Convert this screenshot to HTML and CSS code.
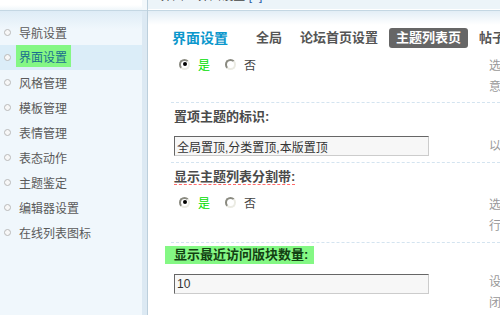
FILE: index.html
```html
<!DOCTYPE html>
<html lang="zh-CN">
<head>
<meta charset="utf-8">
<title>界面设置</title>
<link rel="stylesheet" href="styles.css">
</head>
<body>
<div class="page">
  <aside class="sidebar">
    <div class="side-top"></div>
    <ul class="menu">
      <li><i class="dot"></i><span>导航设置</span></li>
      <li class="active"><i class="dot"></i><span class="hl">界面设置</span></li>
      <li><i class="dot"></i><span>风格管理</span></li>
      <li><i class="dot"></i><span>模板管理</span></li>
      <li><i class="dot"></i><span>表情管理</span></li>
      <li><i class="dot"></i><span>表态动作</span></li>
      <li><i class="dot"></i><span>主题鉴定</span></li>
      <li><i class="dot"></i><span>编辑器设置</span></li>
      <li><i class="dot"></i><span>在线列表图标</span></li>
    </ul>
  </aside>
  <div class="divider"></div>
  <main class="main">
    <div class="topbar"><div class="crumb">界面 &raquo; 界面设置 <span class="plus">[+]</span></div></div>
    <div class="content">
      <div class="titlerow">
        <h3>界面设置</h3>
        <ul class="tabs">
          <li>全局</li>
          <li>论坛首页设置</li>
          <li class="current">主题列表页</li>
          <li>帖子内容页</li>
          <li>个人空间</li>
        </ul>
      </div>
      <div class="form">
        <div class="val v1">
          <div class="field radios"><span class="radio on"></span><span class="yes">是</span><span class="radio"></span><span class="no">否</span></div>
          <div class="tip"><div>选择“是”，主题列表页将显示此项内容，请根据</div><div>意愿设置</div></div>
        </div>
        <div class="label">置项主题的标识:</div>
        <div class="val v2">
          <div class="field"><input class="text" type="text" value="全局置顶,分类置顶,本版置顶"></div>
          <div class="tip"><div>以逗号分隔，依次为全局置顶、分类置顶、本版置顶的标识</div></div>
        </div>
        <div class="label"><span class="ul">显示主题列表分割带:</span></div>
        <div class="val v3">
          <div class="field radios"><span class="radio on"></span><span class="yes">是</span><span class="radio"></span><span class="no">否</span></div>
          <div class="tip"><div>选择“是”，将在置顶主题与普通主题之间显示分割带，</div><div>行间区分更加清晰</div></div>
        </div>
        <div class="label lg"><span class="green">显示最近访问版块数量:</span></div>
        <div class="val v4">
          <div class="field"><input class="text" type="text" value="10"></div>
          <div class="tip"><div>设置显示最近访问版块的数量，建议设置为 10 以内，0 为关</div><div>闭此功能</div></div>
        </div>
      </div>
    </div>
  </main>
</div>
</body>
</html>
```

FILE: styles.css
```css
html, body {
  margin: 0;
  padding: 0;
}
body {
  width: 500px;
  height: 315px;
  overflow: hidden;
  background: #fff;
  font-family: "Liberation Sans", "Noto Sans CJK SC", sans-serif;
  font-size: 12px;
  color: #444;
}
.page {
  display: flex;
  width: 500px;
  height: 315px;
  overflow: hidden;
}

/* sidebar */
.sidebar {
  width: 142px;
  flex: none;
  background: #f0f7fc;
}
.side-top {
  height: 10px;
  background: linear-gradient(#ffffff 50%, #eff6fa);
  border-bottom: 1px solid #c4d7e3;
}
.menu {
  list-style: none;
  margin: 0;
  padding: 9px 0 0;
  background: linear-gradient(#deecf6, #f0f7fc 18px) no-repeat;
}
.menu li {
  display: flex;
  align-items: center;
  height: 25px;
  padding-left: 4px;
  color: #5a5a5a;
  white-space: nowrap;
}
.dot {
  width: 7px;
  height: 7px;
  box-sizing: border-box;
  border: 1px solid #b9b9b9;
  border-radius: 50%;
  background: #f7f7f7;
  margin-right: 8px;
  flex: none;
}
.menu li.active {
  background: #dbedf8;
}
.hl {
  background: #84f784;
  color: #1a6e8e;
  line-height: 16px;
  padding: 5px 4px 1px 3px;
  margin: 0 0 4px -3px;
}
.divider {
  width: 5px;
  flex: none;
  background: linear-gradient(#f3f8fb 10px, #c4d7e3 10px, #c4d7e3 11px, #dce9f3 11px);
  border-right: 1px solid #bccfdc;
}

/* main */
.main {
  flex: 1;
  min-width: 0;
  overflow: hidden;
}
.topbar {
  height: 10px;
  background: #ecf4f9;
  border-bottom: 1px solid #c4d7e3;
  box-shadow: inset 0 -1px #ffffff;
  overflow: hidden;
  padding-left: 12px;
}
.crumb {
  line-height: 16px;
  margin-top: -12px;
  white-space: nowrap;
  color: #444;
}
.plus {
  color: #2a5fa8;
}
.content {
  padding: 17px 0 0 23px;
  background: linear-gradient(#e3eef6, #ffffff 14px) no-repeat;
}
.titlerow {
  display: flex;
  align-items: center;
  height: 20px;
  white-space: nowrap;
}
.titlerow h3 {
  margin: 0 0 0 1px;
  font-size: 14px;
  line-height: 20px;
  font-weight: bold;
  color: #0b97cc;
  flex: none;
}
.tabs {
  display: flex;
  list-style: none;
  margin: 0 0 0 21px;
  padding: 0;
}
.tabs li {
  flex: none;
  padding: 0 7px;
  margin-right: 4px;
  font-size: 13px;
  font-weight: bold;
  line-height: 20px;
  color: #555;
  border-radius: 3px;
}
.tabs li.current {
  background: #666;
  color: #fff;
}

/* form */
.form {
  margin-top: 8px;
}
.val {
  display: grid;
  grid-template-columns: 318px max-content;
}
.field {
  padding-left: 3px;
}
.tip {
  color: #999;
  line-height: 21px;
  white-space: nowrap;
}
.label {
  border-top: 1px dashed #d4e4f0;
  padding: 4px 0 0 3px;
  line-height: 20px;
  font-size: 13px;
  font-weight: bold;
  color: #4a4a4a;
  white-space: nowrap;
}
.label.lg {
  padding-top: 3px;
  line-height: 18px;
}
.ul {
  display: inline-block;
  line-height: 14px;
  vertical-align: top;
  margin-top: 3px;
  border-bottom: 1px dashed #ff6a6a;
}
.green {
  display: inline-block;
  background: #84f884;
  color: #124012;
  padding: 0 6px 0 9px;
  margin-left: -9px;
}

.radios {
  display: flex;
  align-items: center;
  height: 16px;
  padding-left: 8px;
}
.radio {
  width: 11px;
  height: 11px;
  box-sizing: border-box;
  border: 2px solid;
  border-color: #8a8a80 #ebebe3 #ebebe3 #8a8a80;
  border-radius: 50%;
  background: #fff;
  margin-right: 8px;
  display: flex;
  align-items: center;
  justify-content: center;
  flex: none;
}
.radio.on::after {
  content: "";
  width: 4px;
  height: 4px;
  border-radius: 50%;
  background: #000;
}
.yes {
  color: #00dd00;
  margin-right: 15px;
}
.no {
  color: #444;
}

.text {
  display: block;
  width: 255px;
  height: 20px;
  box-sizing: border-box;
  margin: 0;
  padding: 0 2px;
  border: 1px solid;
  border-color: #666 #ccc #ccc #666;
  background: #f7f7f7;
  font: 12px "Liberation Sans", "Noto Sans CJK SC", sans-serif;
  color: #333;
  outline: none;
}

.v1 .tip { padding-bottom: 4px; }
.v2 .field { padding-top: 9px; padding-bottom: 6px; }
.v2 .tip { padding-top: 9px; }
.v3 .field { padding-top: 7px; }
.v3 .tip { padding-top: 8px; padding-bottom: 5px; }
.v4 .field { padding-top: 10px; }
.v4 .tip { padding-top: 8px; }
```
